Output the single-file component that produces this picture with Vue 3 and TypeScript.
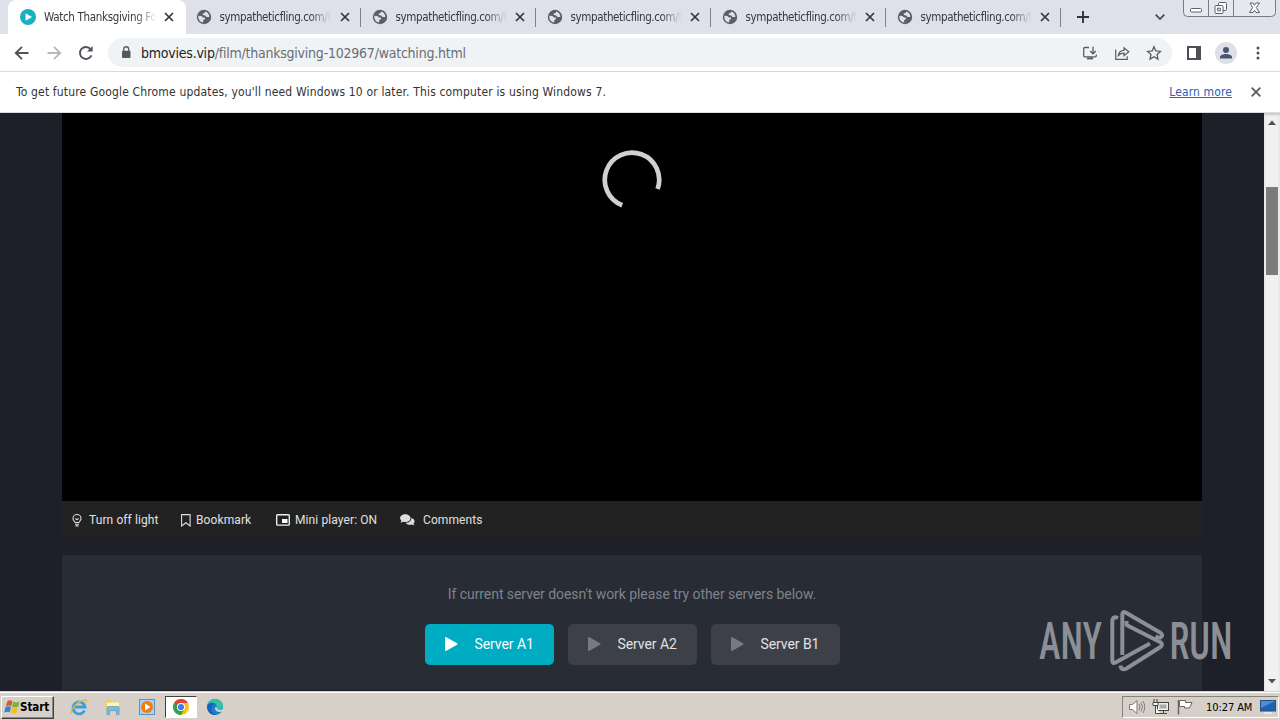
<script setup lang="ts">
const tabs: string[] = Array.from({ length: 5 }, () => 'sympatheticfling.com/tc')
const servers = [
  { name: 'Server A1', active: true },
  { name: 'Server A2', active: false },
  { name: 'Server B1', active: false },
]
</script>

<template>
  <div class="screen">
    <header class="tabs">
      <div class="tab current">
        <svg class="fav" viewBox="0 0 16 16"><circle cx="8" cy="8" r="8" fill="#19b1c1" /><path d="M5.6 4.2v7.6L12 8z" fill="#fff" /></svg>
        <span class="title">Watch Thanksgiving Fo</span>
        <svg class="x" viewBox="0 0 10 10"><path d="M1 1l8 8M9 1L1 9" /></svg>
      </div>
      <div v-for="(t, i) in tabs" :key="i" class="tab">
        <svg class="fav globe" viewBox="0 0 16 16">
          <circle cx="8" cy="8" r="7.2" fill="#5a5e65" />
          <path d="M2.4 6.8l3 .1 1.7 1.500h1.800v1.900l-1.700.7v2.600C4.300 13.300 2.300 11 2.300 8zM9.300 2.600l-.7 1.500-1.800.5v1.500l2.400.4 1.200 1.500h3C13.200 5.400 11.700 3.300 9.300 2.600z" fill="#dee1e9" />
        </svg>
        <span class="title">{{ t }}</span>
        <svg class="x" viewBox="0 0 10 10"><path d="M1 1l8 8M9 1L1 9" /></svg>
      </div>
      <svg class="plus" viewBox="0 0 12 12"><path d="M6 0v12M0 6h12" /></svg>
      <svg class="chev" viewBox="0 0 10 6"><path d="M.7.7L5 5 9.300.7" /></svg>
      <svg class="winbtns" viewBox="0 0 93 18">
        <path d="M.5 0v12.500q0 4 4 4h84q4 0 4-4V0M25.500 0v16M50.500 0v16" fill="#e5e8ee" stroke="#777c85" />
        <rect x="7.500" y="8.500" width="11" height="3.500" rx="1" fill="#fff" stroke="#5c6068" />
        <rect x="35.500" y="2.500" width="8" height="8" rx="1" fill="#fff" stroke="#5c6068" />
        <rect x="32" y="5.500" width="8" height="8" rx="1" fill="#fff" stroke="#5c6068" />
        <rect x="34.700" y="8.200" width="2.600" height="2.600" fill="none" stroke="#5c6068" />
        <path d="M67 3h3l1.500 2.300L73 3h3.500l-3.200 4.600L76.500 12.500H73l-1.500-2.300L70 12.500h-3.500l3.200-4.900z" fill="#fff" stroke="#5c6068" />
      </svg>
    </header>

    <nav class="toolbar">
      <svg class="nav" viewBox="0 0 16 16"><path d="M14.500 8H2M8 1.800L1.800 8 8 14.200" /></svg>
      <svg class="nav dim" viewBox="0 0 16 16"><path d="M1.500 8H14M8 1.800L14.200 8 8 14.200" /></svg>
      <svg class="nav" viewBox="0 0 16 16"><path d="M13.500 10.300A6 6 0 1 1 12.600 4.100L14 5.700" /><path d="M14.600 1v5.600H9z" class="solid" /></svg>
      <div class="omnibox">
        <svg class="lock" viewBox="0 0 10 13"><rect x="1" y="4.700" width="8.500" height="7.300" rx="1" fill="#55585d" /><path d="M2.800 5V3.200a2.450 2.450 0 0 1 4.900 0V5" fill="none" stroke="#55585d" stroke-width="1.300" /></svg>
        <span class="url"><b>bmovies.vip</b>/film/thanksgiving-102967/watching.html</span>
        <svg class="oi" viewBox="0 0 16 16"><path d="M7 2.500H2.700q-1 0-1 1v7.300q0 1 1 1h10.600q1 0 1-1V9.500M11 1.500v7M8.200 6L11 8.800 13.800 6" /><path d="M5 13.400h6" stroke-width="2" /></svg>
        <svg class="oi" viewBox="0 0 16 16"><path d="M1.700 4.500v9.800h11.500v-3M4.300 10.500C4.800 7 7 5.400 10 5.300V2.700L14.800 6.800 10 10.800V8.200C7.500 8.200 5.800 8.900 4.300 10.500z" stroke-width="1.200" /></svg>
        <svg class="oi" viewBox="0 0 16 16"><path d="M8 1.700l1.850 4.300 4.650.4-3.500 3.100 1 4.600L8 11.700 4 14.100l1-4.600-3.500-3.100 4.650-.4z" /></svg>
      </div>
      <svg class="panelicon" viewBox="0 0 14 14"><rect x="1" y="1" width="12" height="12" fill="none" stroke="#4c4f54" stroke-width="2" /><path d="M9 0h5v14H9z" fill="#4c4f54" /></svg>
      <svg class="avatar" viewBox="0 0 22 22"><circle cx="11" cy="11" r="11" fill="#dde1e7" /><circle cx="11" cy="8" r="3" fill="#4a5470" /><path d="M5 16.500v-1.300C5 12.800 8.500 12 11 12s6 .8 6 3.200v1.300z" fill="#4a5470" /></svg>
      <svg class="dots" viewBox="0 0 4 14"><circle cx="2" cy="2" r="1.500" /><circle cx="2" cy="7" r="1.500" /><circle cx="2" cy="12" r="1.500" /></svg>
    </nav>

    <div class="infobar">
      <span class="notice">To get future Google Chrome updates, you'll need Windows 10 or later. This computer is using Windows 7.</span>
      <a class="learn">Learn more</a>
      <svg class="dismiss" viewBox="0 0 10 10"><path d="M.7.7l8.600 8.600M9.300.7L.7 9.300" /></svg>
    </div>

    <main class="viewport">
      <div class="page">
        <section class="video">
          <svg class="spinner" viewBox="0 0 60 60"><path d="M20.200 56.200A27.200 27.200 0 1 1 55.600 40" /></svg>
        </section>
        <section class="controls">
          <span class="ctl light">
            <svg viewBox="0 0 10 13" width="10" height="13"><path d="M3 8.500C2.500 7 1 6.500 1 4.500a4 4 0 0 1 8 0C9 6.500 7.500 7 7 8.500zM3.400 4.500L5 5.700l1.600-1.200M3 10.200h4M3.500 11.900h3" fill="none" stroke="#ddd" stroke-width="1.100" /></svg>
            <span>Turn off light</span>
          </span>
          <span class="ctl mark">
            <svg viewBox="0 0 10 13" width="10" height="13"><path d="M.6.600h8.500v11.400L4.900 8.700.6 12z" fill="none" stroke="#ddd" stroke-width="1.100" /></svg>
            <span>Bookmark</span>
          </span>
          <span class="ctl mini">
            <svg viewBox="0 0 14 12" width="14" height="12"><rect x=".7" y=".7" width="12.600" height="10.400" rx=".8" fill="none" stroke="#eee" stroke-width="1.400" /><path d="M6 5h5.500v4H6z" fill="#fff" /></svg>
            <span>Mini player: ON</span>
          </span>
          <span class="ctl com">
            <svg viewBox="0 0 15 12" width="15" height="12"><path d="M5.300.3c2.900 0 5.200 1.700 5.200 3.900S8.200 8.100 5.300 8.100c-.8 0-1.600-.1-2.200-.4-.9.600-1.800.8-2.800.7.600-.6 1-1.200 1.100-1.800C.600 5.900.1 5.100.1 4.200.1 2 2.400.3 5.300.3z" fill="#ddd" /><path d="M11.300 4c2 .5 3.300 1.700 3.300 3.300 0 .9-.4 1.600-1.100 2.200.1.600.5 1.300 1 1.800-1 .1-1.900-.2-2.700-.8-2.500.6-5-.1-6.100-1.600C8.800 8.900 11.600 7 11.300 4z" fill="#ddd" /></svg>
            <span>Comments</span>
          </span>
        </section>
        <section class="servers">
          <p>If current server doesn't work please try other servers below.</p>
          <div class="row">
            <button v-for="s in servers" :key="s.name" :class="{ on: s.active }">
              <svg viewBox="0 0 14 16" width="14" height="16"><path d="M2 2v12L12.500 8z" fill="currentColor" stroke="currentColor" stroke-width="2" stroke-linejoin="round" /></svg>
              <span>{{ s.name }}</span>
            </button>
          </div>
        </section>
      </div>
      <aside class="scroll">
        <svg viewBox="0 0 8 5" width="8" height="5"><path d="M0 5h8L4 .5z" fill="#505050" /></svg>
        <i class="thumb"></i>
        <svg class="down" viewBox="0 0 8 5" width="8" height="5"><path d="M0 0h8L4 4.500z" fill="#505050" /></svg>
      </aside>
    </main>

    <svg class="watermark" viewBox="0 0 200 64">
      <text x="1" y="50.300" textLength="63" lengthAdjust="spacingAndGlyphs">ANY</text>
      <g fill="none" stroke="#8c8f96" stroke-width="4" stroke-linejoin="round">
        <path d="M80 9Q74.300 6.500 74.300 13V51.500Q74.300 55.500 78 53.300L112 34.500" />
        <path d="M84.300 46V6Q84.300 1.700 88 3.700L122.500 23.700Q126 26.500 122.500 28.500Q121 29 117.500 27.200" />
        <path d="M88.500 12V16L122 33Q126 35.500 122 38.300L88.500 59.500Q83 62 82.500 56.500" />
      </g>
      <text x="131.500" y="50.300" textLength="63" lengthAdjust="spacingAndGlyphs">RUN</text>
    </svg>

    <footer class="taskbar">
      <div class="start">
        <svg viewBox="0 0 16 16" width="16" height="16">
          <path d="M3.500 2Q6 .5 8.500 2.200L7.200 7.300Q4.500 5.800 1.800 7.300z" fill="#e3572c" />
          <path d="M9.200 2.500q3 1.700 6.500 0L14.300 7.500q-3 1.700-6.300.2z" fill="#79b43e" />
          <path d="M1.600 8.100q2.700-1.500 5.400 0l-1.300 5.200Q3 12 .2 13.500z" fill="#2f83d3" />
          <path d="M7.800 8.500q3 1.700 6.300 0l-1.400 5.200q-3 1.700-6.200.1z" fill="#f5bd27" />
        </svg>
        <span>Start</span>
      </div>
      <div class="launch">
        <svg viewBox="0 0 18 18"><path d="M14.500 12.500A6 6 0 1 1 15 9H5" fill="none" stroke="#3d9ddd" stroke-width="2.800" /><path d="M1.500 16C-.5 12 7 3 15.500 1.700q2 .3.500 3" fill="none" stroke="#e8b93c" stroke-width="1.300" /></svg>
        <svg viewBox="0 0 18 18"><path d="M2 2h5l1 1.500h8V14H2z" fill="#e9cf72" /><path d="M3 4.500h12v4H3z" fill="#fff4b8" /><path d="M3 16.500V10q0-1.500 1.500-1.500h9Q15 8.500 15 10v6.500h-2.500v-4h-7v4z" fill="#79bce0" stroke="#4a91b8" stroke-width=".6" /></svg>
        <svg viewBox="0 0 18 18"><rect x="1.500" y="1.500" width="15" height="15" fill="#acd0ee" stroke="#5b94c6" /><circle cx="9" cy="9" r="6" fill="#f17b14" /><path d="M7 5.500v7L12.500 9z" fill="#fff" /></svg>
        <div class="pressed">
          <svg viewBox="0 0 18 18"><circle cx="9" cy="9" r="8" fill="#fbc116" /><path d="M9 9L2.070 5A8 8 0 0 1 15.930 5H9z" fill="#df4437" /><path d="M2.070 5A8 8 0 0 0 9 17l3.500-6z" fill="#30a353" /><path d="M2.070 5L6 11.500 9 9z" fill="#30a353" /><path d="M2.070 5H9v4z" fill="#df4437" /><circle cx="9" cy="9" r="4" fill="#fff" /><circle cx="9" cy="9" r="3.100" fill="#397ee9" /></svg>
        </div>
        <svg viewBox="0 0 18 18"><circle cx="9" cy="9" r="8" fill="#1683d0" /><path d="M1.200 8C2 3 5.500 1 9 1c4.500 0 8 3.200 8 6.800 0 2.700-2 4.200-4.300 4.200-1.800 0-2.700-.8-2.700-1.500 0-.7.700-.8.700-2.200C10.700 6 7 4.300 4 5.500 2.700 6 1.700 7 1.200 8z" fill="#35c1a5" /><path d="M1.300 7.200C2.500 4.300 8.500 3.500 10.400 7 7.500 5.500 5 8 5.500 11.300c.4 2.700 2.400 4.900 5 5.500C5 17.900.5 13.500 1.300 7.200z" fill="#1764b4" /><path d="M10 9.500c-.5 3.500 4 4.300 7 2.300" fill="none" stroke="#d6d1ca" stroke-width="2" /></svg>
      </div>
      <div class="tray">
        <svg viewBox="0 0 18 16" width="18" height="16"><path d="M1.500 5.500h3L9 1.500v13L4.500 10.500h-3z" fill="#fff" stroke="#777" /><path d="M11 5q2 3 0 6M13 3.500q3 4.500 0 9M15 2q3.500 6 0 12" fill="none" stroke="#777" stroke-width=".9" /></svg>
        <svg viewBox="0 0 18 16" width="18" height="16"><rect x="5.500" y="3.500" width="11" height="8" fill="#eee" stroke="#444" /><rect x="7.500" y="5.500" width="7" height="4" fill="#aaa" /><path d="M8 14.500h7M11.500 12v2" stroke="#444" /><path d="M2 0v3M5 0v3M1 3.500h5v3H1zM3.500 7v7.500H8" fill="#fff" stroke="#444" /></svg>
        <svg viewBox="0 0 18 16" width="18" height="16"><path d="M2.500 1v14.500" stroke="#666" stroke-width="1.500" /><path d="M3.500 1.500h6v2h6.500L13.500 9H8.500V7.500h-5z" fill="#fff" stroke="#666" /></svg>
        <span class="clock">10:27 AM</span>
        <svg class="desk" viewBox="0 0 16 14" width="16" height="14"><rect x=".5" y=".5" width="15" height="10.500" fill="#1f63b8" stroke="#294f7c" /><path d="M1 1h14L1 8z" fill="#4b8ed3" /><path d="M4 13h8" stroke="#eee" stroke-width="1.500" /></svg>
      </div>
    </footer>
  </div>
</template>

<style>
html, body { margin: 0; overflow: hidden; }
</style>

<style scoped>
* { box-sizing: border-box; }
.screen { position: relative; width: 1280px; height: 720px; overflow: hidden; display: flex; flex-direction: column; background: #fff; font-family: "DejaVu Sans Condensed", "DejaVu Sans", sans-serif; font-stretch: condensed; }
svg { flex: none; display: block; }

.tabs { flex: none; height: 34px; display: flex; align-items: center; background: #dee1e9; padding-left: 8px; }
.tab { width: 175px; height: 34px; flex: none; display: flex; align-items: center; padding-left: 10px; position: relative; }
.tab.current { width: 178px; background: #fff; border-radius: 8px 8px 0 0; padding-left: 12px; }
.tab:not(.current)::after { content: ""; position: absolute; right: 0; top: 8px; width: 1px; height: 19px; background: #7f848c; }
.fav { width: 16px; height: 16px; }
.title { width: 114px; margin-left: 8px; font-size: 11.500px; line-height: 16px; white-space: nowrap; color: #35383d; letter-spacing: -.32px; -webkit-mask-image: linear-gradient(90deg, #000 80%, transparent 99%); mask-image: linear-gradient(90deg, #000 80%, transparent 99%); }
.tab:not(.current) .title { margin-left: 7.500px; width: 112.500px; letter-spacing: -.36px; }
.x { width: 10px; height: 10px; margin-left: 6px; fill: none; stroke: #33363b; stroke-width: 1.700; }
.tab:not(.current) .x { margin-left: 8px; }
.tab:not(.current) + .tab { padding-left: 11px; }
.tab:not(.current) + .tab .x { margin-left: 7px; }
.plus { width: 12px; height: 12px; margin-left: 16px; stroke: #303338; stroke-width: 1.900; }
.chev { width: 10px; height: 6px; margin-left: 66px; fill: none; stroke: #44474c; stroke-width: 1.700; }
.winbtns { width: 93px; height: 18px; margin-left: 18px; align-self: flex-start; }

.toolbar { flex: none; height: 38px; border-bottom: 1px solid #d8dadd; display: flex; align-items: center; padding-left: 14px; }
.nav { width: 16px; height: 16px; margin-right: 16px; fill: none; stroke: #50545a; stroke-width: 1.900; }
.nav.dim { stroke: #b7b9bc; }
.nav .solid { fill: #50545a; stroke: none; }
.omnibox { width: 1064px; height: 29px; margin-left: -2px; border-radius: 15px; background: #f0f3f6; display: flex; align-items: center; padding-left: 13px; }
.lock { width: 10px; height: 13px; }
.url { width: 941px; flex: none; margin-left: 10px; font-size: 14px; line-height: 20px; letter-spacing: -.23px; color: #6a6e73; white-space: nowrap; }
.url b { font-weight: 400; color: #202328; }
.oi { width: 16px; height: 16px; margin-right: 16px; fill: none; stroke: #5a5d63; stroke-width: 1.300; }
.oi:last-child { margin-right: 0; }
.panelicon { width: 14px; height: 14px; margin-left: 15px; }
.avatar { width: 22px; height: 22px; margin-left: 14px; }
.dots { width: 4px; height: 14px; margin-left: 19px; fill: #4c4f54; }

.infobar { flex: none; height: 41px; display: flex; align-items: center; padding: 0 19px 0 16px; font-size: 12px; color: #333; border-bottom: 1px solid #ddd; }
.notice { letter-spacing: .16px; white-space: nowrap; }
.learn { margin-left: auto; color: #2b62b5; text-decoration: underline; white-space: nowrap; letter-spacing: .12px; }
.dismiss { width: 10px; height: 10px; margin-left: 19px; fill: none; stroke: #55585d; stroke-width: 1.700; }

.viewport { flex: none; height: 578px; display: flex; background: #1e2029; }
.page { width: 1264px; padding: 0 62px; display: flex; flex-direction: column; font-family: Roboto, sans-serif; font-stretch: normal; }
.video { height: 388px; background: #000; padding: 36px 0 0 540px; }
.spinner { width: 60px; height: 60px; fill: none; stroke: #d0d0d0; stroke-width: 4.700; }
.controls { height: 36px; background: #222223; display: flex; align-items: center; padding: 2px 0 0 10px; font-size: 12px; letter-spacing: .1px; color: #e0e0e0; white-space: nowrap; }
.ctl { display: flex; align-items: center; flex: none; height: 20px; }
.light { width: 109px; gap: 7px; }
.mark { width: 95px; gap: 5px; }
.mini { width: 124px; gap: 5px; }
.com { gap: 8px; }
.servers { height: 135px; margin-top: 18px; background: #282c34; display: flex; flex-direction: column; align-items: center; }
.servers p { margin: 29px 0 0; font-size: 14px; line-height: 20px; letter-spacing: -.065px; color: #7f838b; white-space: nowrap; }
.row { display: flex; gap: 14px; margin-top: 20px; }
button { width: 129px; height: 41px; border: 0; border-radius: 5px; background: #3d4048; color: #777a80; display: flex; align-items: center; padding: 0 0 1px 19px; gap: 17px; font: 14px Roboto, sans-serif; letter-spacing: -.08px; white-space: nowrap; }
button span { color: #e1e2e4; }
button.on { background: #00acc1; color: #fff; }
button.on span { color: #fff; }
.scroll { width: 16px; background: #f0f0f0; display: flex; flex-direction: column; align-items: center; padding: 7px 0; box-shadow: inset 0 2px 2px #ccc; }
.thumb { width: 12px; height: 88px; margin-top: 62px; background: #7b7b7b; }
.down { margin-top: auto; }

.watermark { position: absolute; left: 1038px; top: 609px; width: 200px; height: 64px; }
.watermark text { font-family: Roboto, sans-serif; font-stretch: condensed; font-size: 52px; font-weight: 500; fill: #8c8f96; }

.taskbar { flex: 1; display: flex; align-items: center; background: #d6d0c8; box-shadow: inset 0 1px #d6d0c8, inset 0 2px #fff; padding-top: 3px; }
.start { width: 53px; height: 23px; margin-left: 1px; display: flex; align-items: center; padding-left: 2px; border: 1px solid; border-color: #fff #404040 #404040 #fff; box-shadow: inset -1px -1px #8c8882; font: bold 11.500px "DejaVu Sans Condensed", "DejaVu Sans", sans-serif; font-stretch: condensed; color: #000; }
.start span { letter-spacing: -.05px; }
.launch { display: flex; align-items: center; margin-left: 16px; gap: 16px; }
.launch svg { width: 18px; height: 18px; }
.pressed { width: 32px; height: 22px; margin: 0 -7px; display: flex; align-items: center; justify-content: center; background: #fff; border: 1px solid; border-color: #404040 #fff #fff #404040; }
.tray { width: 157px; height: 22px; margin: 0 1px 0 auto; display: flex; align-items: center; border: 1px solid; border-color: #85817b #fff #fff #85817b; padding-left: 5px; gap: 6px; }
.clock { width: 48px; margin-left: 6px; font-size: 11px; color: #000; white-space: nowrap; letter-spacing: -.08px; }
.desk { margin-left: 0; }
</style>
